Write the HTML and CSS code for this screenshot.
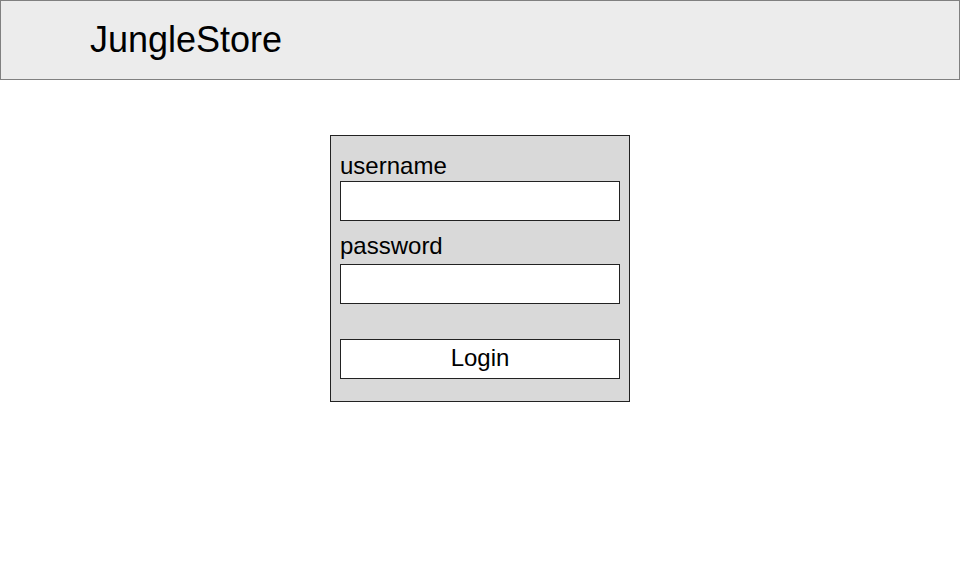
FILE: index.html
```html
<!DOCTYPE html>
<html lang="en">
<head>
    <meta charset="UTF-8">
    <meta name="viewport" content="width=device-width, initial-scale=1.0">
    <title>JungleStore - Login</title>
    <link rel="stylesheet" href="styles.css">
</head>
<body>

    <header class="Cabecera">
        <h1 class="Titulo">JungleStore</h1>
    </header>

    <main class="Contenedor">
        <form class="Login" onsubmit="return false;">
            <div class="Campo">
                <label for="usuario">username</label>
                <input type="text" id="usuario" class="Entrada">
            </div>
            <div class="Campo Campo-2">
                <label for="clave">password</label>
                <input type="password" id="clave" class="Entrada">
            </div>
            <button type="submit" class="Boton">Login</button>
        </form>
    </main>

</body>
</html>
```

FILE: styles.css
```css
body {
    margin: 0;
    font-family: "Liberation Sans", Arial, sans-serif;
    background: #ffffff;
    color: #000000;
}

.Cabecera {
    box-sizing: border-box;
    height: 80px;
    padding-left: 89px;
    background-color: #ececec;
    border: 1px solid #808080;
}

.Titulo {
    margin: 0;
    font-size: 36px;
    font-weight: normal;
    line-height: 78px;
}

.Contenedor {
    display: flex;
    justify-content: center;
    padding-top: 55px;
}

.Login {
    box-sizing: border-box;
    width: 300px;
    padding: 16px 9px 22px;
    background-color: #d9d9d9;
    border: 1px solid #222222;
}

.Campo label {
    display: block;
    font-size: 24px;
    line-height: 28px;
    margin-bottom: 1px;
}

.Campo-2 {
    margin-top: 11px;
}

.Campo-2 label {
    margin-bottom: 4px;
}

.Entrada {
    display: block;
    box-sizing: border-box;
    width: 100%;
    height: 40px;
    margin: 0;
    background: #ffffff;
    border: 1px solid #222222;
    border-radius: 0;
    font-family: inherit;
    font-size: 20px;
}

.Boton {
    display: block;
    box-sizing: border-box;
    width: 100%;
    height: 40px;
    margin-top: 35px;
    padding: 0 0 2px;
    background: #ffffff;
    border: 1px solid #222222;
    border-radius: 0;
    font-family: inherit;
    font-size: 24px;
    color: #000000;
    cursor: pointer;
}
```
